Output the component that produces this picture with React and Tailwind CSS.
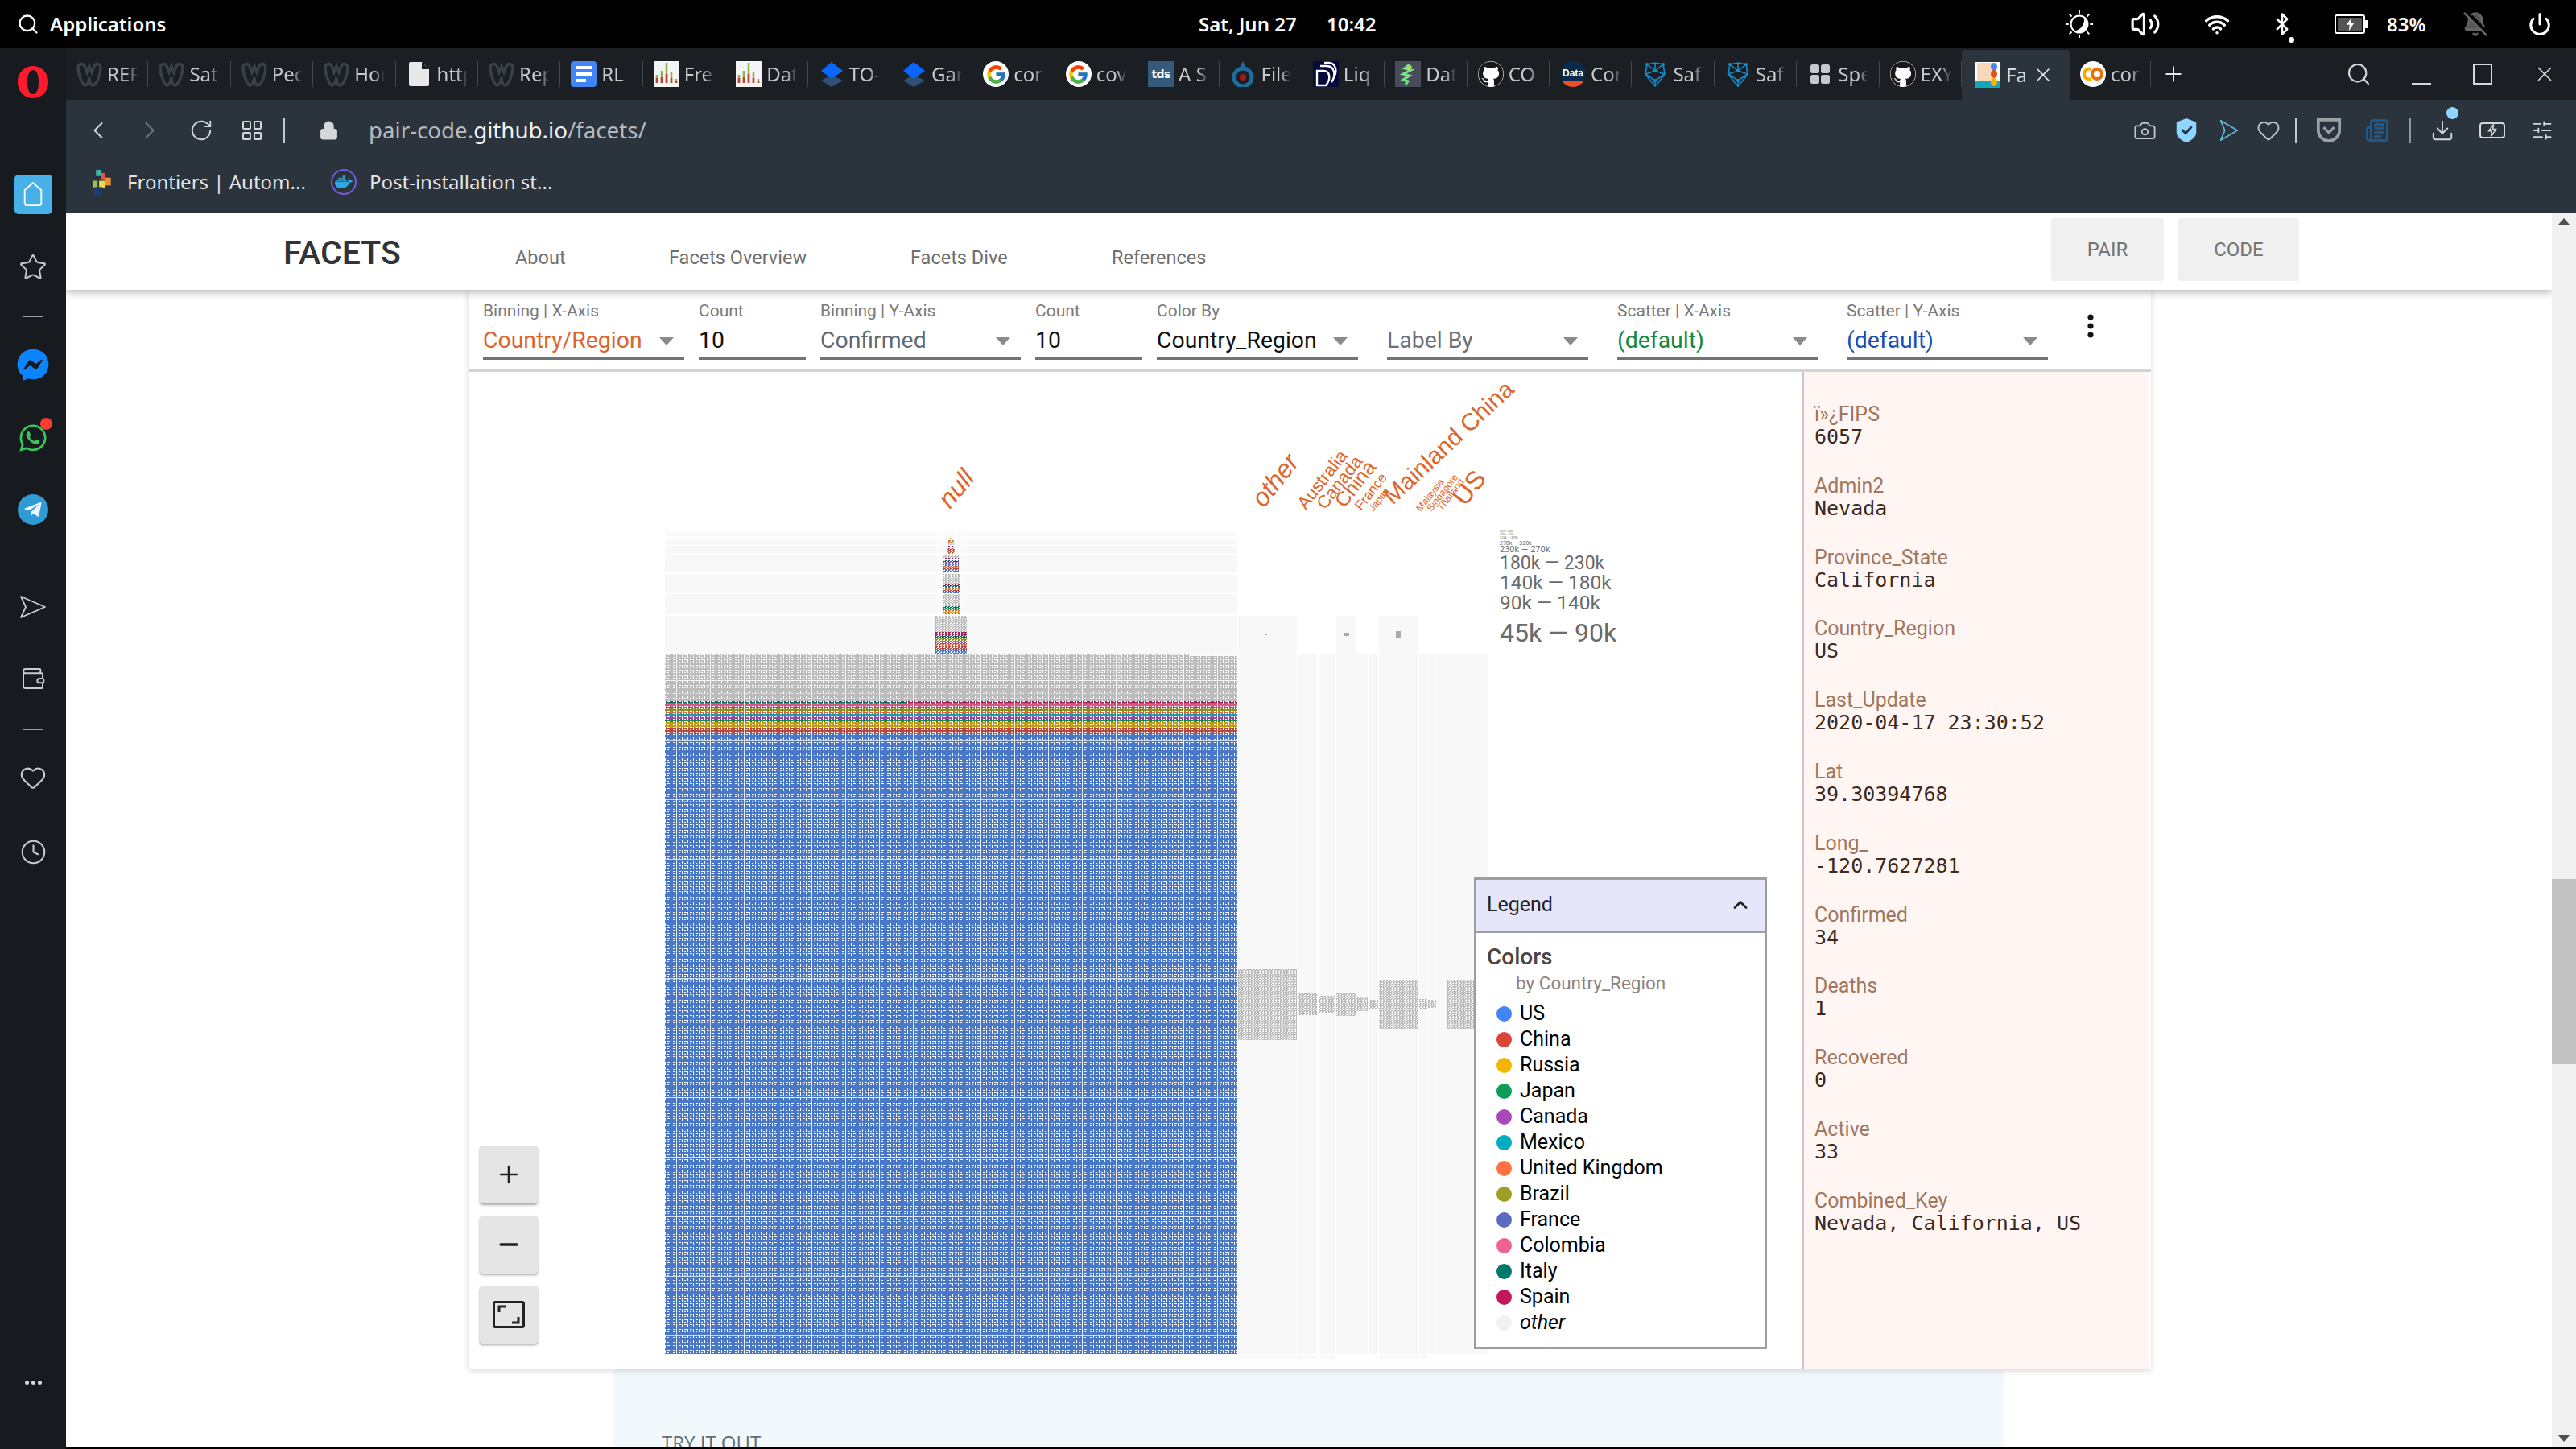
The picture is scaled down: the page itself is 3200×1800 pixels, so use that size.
import React from 'react';
import { Search, RotateCw, Lock, Camera, Heart, Plus, Minus, X, Star, Clock, ChevronLeft, ChevronRight, ChevronUp, Download, SlidersHorizontal, Volume2, BellOff, Power, Bluetooth, Wifi, Newspaper, Wallet } from 'lucide-react';
import { FaGithub, FaFacebookMessenger, FaWhatsapp, FaTelegramPlane, FaDocker } from 'react-icons/fa';
import { FcGoogle } from 'react-icons/fc';

const W = () => (
  <svg viewBox="0 0 32 32" className="w-[32px] h-[32px]"><path d="M2 8c0-5 6-6 8-2l3 8 3-8 3 8 3-8c2-4 8-3 8 2 0 8-5 22-10 22-3 0-4-7-4-10-1 3-2 10-5 10C7 30 2 16 2 8z" fill="none" stroke="#3a4047" strokeWidth="3.5" /></svg>
);
const Doc = () => (
  <svg viewBox="0 0 32 32" className="w-[32px] h-[32px]"><path d="M5 1h14l9 9v19a2 2 0 0 1-2 2H5a2 2 0 0 1-2-2V3a2 2 0 0 1 2-2z" fill="#e8e8e8" /><path d="M19 1v9h9" fill="#1b1e22" /></svg>
);
const GDoc = () => (
  <svg viewBox="0 0 32 32" className="w-[32px] h-[32px]"><rect width="32" height="32" rx="4" fill="#4285f4" /><rect x="6" y="6" width="20" height="4" fill="#fff" /><rect x="6" y="14" width="20" height="4" fill="#fff" /><rect x="6" y="22" width="13" height="4" fill="#fff" /></svg>
);
const Chart = () => (
  <svg viewBox="0 0 32 32" className="w-[32px] h-[32px]"><rect width="32" height="32" fill="#f5f5f5" /><path d="M4 27v-10M10 27V12M16 27V2M22 27V14M28 27v-5" stroke="#8fb24a" strokeWidth="2.5" /><path d="M4 27v-6M10 27v-7M16 27V16M22 27v-6M28 27v-2" stroke="#c23a3a" strokeWidth="2.5" /></svg>
);
const Drop = () => (
  <svg viewBox="0 0 32 32" className="w-[32px] h-[32px]"><path d="M16 17 L30 24 L16 32 L3 24z" fill="#2f4f74" /><path d="M16 1 L30 12 L16 22 L3 12z" fill="#0a66ff" /></svg>
);
const Tds = () => (
  <div className="w-[32px] h-[32px] bg-[#35597a] text-white text-[14px] font-bold flex items-center justify-center font-['DejaVu_Sans',sans-serif] tracking-tighter">tds</div>
);
const Wiki = () => (
  <svg viewBox="0 0 32 32" className="w-[32px] h-[32px]"><circle cx="16" cy="20" r="11" fill="none" stroke="#1f6d9e" strokeWidth="5" /><circle cx="16" cy="20" r="4" fill="#9c1c1c" /><path d="M16 0l4 8h-8z" fill="#1f6d9e" /></svg>
);
const Dl = () => (
  <svg viewBox="0 0 32 32" className="w-[32px] h-[32px]"><rect width="32" height="32" fill="#050a3a" /><path d="M5 12h8c8 0 10 10 3 18H5zM9 6h8c10 0 12 12 6 20M14 2h6c8 0 10 10 7 16" fill="none" stroke="#fff" strokeWidth="2.4" /></svg>
);
const Dat = () => (
  <svg viewBox="0 0 32 32" className="w-[32px] h-[32px]"><rect width="32" height="32" fill="#474b5a" /><path d="M18 4l-6 5 8 2-10 5 8 2-8 5 6 2-3 4" fill="none" stroke="#7be08a" strokeWidth="3" /><path d="M20 6l-4 4" stroke="#e5e04a" strokeWidth="3" /></svg>
);
const Gh = () => (
  <div className="w-[32px] h-[32px] rounded-full bg-white flex items-center justify-center overflow-hidden"><FaGithub className="w-[32px] h-[32px] text-[#191717]" /></div>
);
const DC = () => (
  <div className="w-[32px] h-[32px] rounded-full bg-[#0a2a4a] overflow-hidden flex flex-col items-center"><span className="text-white text-[12px] font-bold leading-[30px] h-[24px] font-['Liberation_Sans',sans-serif]">Data</span><div className="w-full flex-1 bg-[#f04e23]" /></div>
);
const Net = () => (
  <svg viewBox="0 0 32 32" className="w-[32px] h-[32px]"><path d="M6 4l10-2 10 2 2 12-6 8-6 7-6-7-6-8zM6 4l10 8 10-8M16 12l-12 4 12 8 12-8zM16 2v10M16 24v7" fill="none" stroke="#0e8fd0" strokeWidth="1.6" /><circle cx="6" cy="4" r="2" fill="#0e8fd0" /><circle cx="26" cy="4" r="2" fill="#0e8fd0" /><circle cx="16" cy="12" r="2" fill="#0e8fd0" /><circle cx="16" cy="24" r="2" fill="#0e8fd0" /></svg>
);
const Spe = () => (
  <svg viewBox="0 0 32 32" className="w-[32px] h-[32px]"><rect x="4" y="4" width="11" height="11" rx="2.5" fill="#c4c8cc" /><rect x="17" y="4" width="11" height="11" rx="2.5" fill="#c4c8cc" /><rect x="4" y="17" width="11" height="11" rx="2.5" fill="#c4c8cc" /><rect x="17" y="17" width="11" height="11" rx="2.5" fill="#c4c8cc" /></svg>
);
const Fa = () => (
  <svg viewBox="0 0 32 32" className="w-[32px] h-[32px]"><rect width="32" height="32" fill="#fff" /><rect x="3" y="1" width="19" height="22" fill="#f9d8b8" /><rect y="24" width="32" height="8" fill="#12a5bd" /><ellipse cx="24" cy="6" rx="4" ry="5" fill="#4285f4" /><ellipse cx="24" cy="15" rx="4" ry="5" fill="#ea4b1f" /><ellipse cx="24" cy="25" rx="4" ry="5" fill="#f4b400" /></svg>
);
const Colab = () => (
  <svg viewBox="0 0 32 32" className="w-[32px] h-[32px]"><circle cx="16" cy="16" r="16" fill="#fff" /><path d="M14 10a6.5 6.5 0 1 0 0 12" fill="none" stroke="#f9ab00" strokeWidth="4" /><circle cx="21" cy="16" r="6" fill="none" stroke="#e8710a" strokeWidth="4" /></svg>
);
const G = () => (
  <div className="w-[32px] h-[32px] rounded-full bg-white flex items-center justify-center"><FcGoogle className="w-[27px] h-[27px]" /></div>
);

const tabIcons = { w: W, doc: Doc, gdoc: GDoc, chart: Chart, drop: Drop, g: G, tds: Tds, wiki: Wiki, dl: Dl, dat: Dat, gh: Gh, dc: DC, net: Net, spe: Spe };
const tabs = [
  ['w', 'REF'], ['w', 'Sat'], ['w', 'Pec'], ['w', 'Hor'], ['doc', 'http'], ['w', 'Rep'], ['gdoc', 'RL'], ['chart', 'Fre'], ['chart', 'Dat'], ['drop', 'TO-'], ['drop', 'Gar'], ['g', 'cor'], ['g', 'cov'], ['tds', 'A S'], ['wiki', 'File'], ['dl', 'Liq'], ['dat', 'Dat'], ['gh', 'CO'], ['dc', 'Cor'], ['net', 'Saf'], ['net', 'Saf'], ['spe', 'Spe'], ['gh', 'EXY'],
];

function Tab({ kind, text }) {
  const I = tabIcons[kind];
  return (
    <div className="w-[102.4px] h-[64px] shrink-0 flex items-center relative pl-[13px]">
      <I />
      <span className="ml-[6px] w-[38px] overflow-hidden whitespace-nowrap text-[24px] text-[#c6cacd] [mask-image:linear-gradient(to_right,black_65%,transparent)]">{text}</span>
      <div className="absolute right-0 top-[16px] h-[32px] w-px bg-[#41464c]" />
    </div>
  );
}

function SideCell({ mt, children }) {
  return <div className={`h-[44px] flex items-center justify-center ${mt}`}>{children}</div>;
}
const SideLine = () => <div className="w-[24px] h-px bg-[#9ba0a5]" />;

function Sidebar() {
  return (
    <div className="w-[82px] shrink-0 bg-[#171b20] flex flex-col pt-[20px] pb-[61px]">
      <SideCell mt="">
        <svg viewBox="0 0 40 42" className="w-[40px] h-[42px]"><path fillRule="evenodd" d="M20 1C9 1 1 10 1 21s8 20 19 20 19-9 19-20S31 1 20 1zm0 5c-5 0-7 7-7 15s2 15 7 15 7-7 7-15-2-15-7-15z" fill="#ff1b2d" /></svg>
      </SideCell>
      <SideCell mt="mt-[95px]">
        <div className="w-[47px] h-[49px] rounded-[5px] bg-[#47b0e8] flex items-center justify-center">
          <svg viewBox="0 0 32 36" className="w-[30px] h-[34px]"><path d="M5 13 16 3l11 10v17a3 3 0 0 1-3 3H8a3 3 0 0 1-3-3z" fill="none" stroke="#fff" strokeWidth="2" strokeLinejoin="round" /></svg>
        </div>
      </SideCell>
      <SideCell mt="mt-[47px]"><Star className="w-[36px] h-[36px] text-[#c8ccd0]" strokeWidth={1.3} /></SideCell>
      <SideCell mt="mt-[17px]"><SideLine /></SideCell>
      <SideCell mt="mt-[16px]">
        <FaFacebookMessenger className="w-[40px] h-[40px] text-[#0a84ff]" />
      </SideCell>
      <SideCell mt="mt-[47px]">
        <div className="relative">
          <FaWhatsapp className="w-[38px] h-[38px] text-[#3bc45a]" />
          <div className="absolute -right-[5px] -top-[6px] w-[15px] h-[15px] rounded-full bg-[#ff3b30]" />
        </div>
      </SideCell>
      <SideCell mt="mt-[45px]">
        <div className="w-[38px] h-[38px] rounded-full bg-[#2f9bd6] flex items-center justify-center"><FaTelegramPlane className="w-[24px] h-[24px] text-[#eef6fb]" /></div>
      </SideCell>
      <SideCell mt="mt-[17px]"><SideLine /></SideCell>
      <SideCell mt="mt-[16px]">
        <svg viewBox="0 0 34 34" className="w-[34px] h-[34px]"><path d="M2 4 32 17 2 30l6-13z" fill="none" stroke="#c8ccd0" strokeWidth="1.8" strokeLinejoin="round" /></svg>
      </SideCell>
      <SideCell mt="mt-[45px]"><Wallet className="w-[32px] h-[32px] text-[#c8ccd0]" strokeWidth={1.5} /></SideCell>
      <SideCell mt="mt-[19px]"><SideLine /></SideCell>
      <SideCell mt="mt-[16px]"><Heart className="w-[34px] h-[34px] text-[#c8ccd0]" strokeWidth={1.5} /></SideCell>
      <SideCell mt="mt-[48px]"><Clock className="w-[33px] h-[33px] text-[#c8ccd0]" strokeWidth={1.5} /></SideCell>
      <div className="mt-auto h-[44px] flex items-center justify-center gap-[3px]">
        <span className="w-[5px] h-[5px] rounded-full bg-[#d5d8da]" />
        <span className="w-[5px] h-[5px] rounded-full bg-[#d5d8da]" />
        <span className="w-[5px] h-[5px] rounded-full bg-[#d5d8da]" />
      </div>
    </div>
  );
}

function TopBar() {
  return (
    <div className="h-[60px] shrink-0 bg-black text-white flex items-center text-[24px] font-semibold">
      <Search className="ml-[21px] w-[28px] h-[28px] shrink-0" strokeWidth={2} />
      <span className="ml-[13px] w-[145px] whitespace-nowrap">Applications</span>
      <span className="ml-[1282px] w-[121px] whitespace-nowrap">Sat, Jun 27</span>
      <span className="ml-[38px] w-[62px] whitespace-nowrap">10:42</span>
      <div className="ml-[851px] w-[44px] flex justify-center">
        <svg viewBox="0 0 40 40" className="w-[38px] h-[38px]"><circle cx="20" cy="20" r="11" fill="none" stroke="#fff" strokeWidth="2.2" /><path d="M20 9a11 11 0 0 1 0 22 16 16 0 0 0 0-22z" fill="#fff" transform="rotate(35 20 20)" /><path d="M20 2v4M20 34v4M2 20h4M34 20h4M7 7l3 3M30 30l3 3M7 33l3-3M30 10l3-3" stroke="#fff" strokeWidth="2" /></svg>
      </div>
      <Volume2 className="ml-[41px] w-[38px] h-[38px] shrink-0" strokeWidth={2} />
      <Wifi className="ml-[54px] w-[32px] h-[32px] shrink-0" strokeWidth={2.6} />
      <div className="ml-[50px] relative w-[30px]"><Bluetooth className="w-[30px] h-[34px]" strokeWidth={2} /><div className="absolute right-[0px] -bottom-[6px] w-[7px] h-[7px] rounded-full bg-white" /></div>
      <div className="ml-[50px] w-[38px] h-[24px] shrink-0 border-2 border-white rounded-[3px] flex items-center justify-center relative">
        <div className="absolute inset-[2px] bg-[#555]" />
        <svg viewBox="0 0 16 20" className="relative w-[13px] h-[18px]"><path d="M10 0 2 11h5l-1 9 8-12H9z" fill="#fff" /></svg>
        <div className="absolute -right-[6px] top-[5px] w-[4px] h-[10px] bg-white" />
      </div>
      <span className="ml-[27px] w-[50px] whitespace-nowrap">83%</span>
      <BellOff className="ml-[44px] w-[32px] h-[32px] shrink-0 text-[#666]" fill="#555" strokeWidth={2} />
      <Power className="ml-[49px] w-[30px] h-[30px] shrink-0" strokeWidth={2.4} />
    </div>
  );
}

function TabStrip() {
  return (
    <div className="h-[64px] shrink-0 bg-[#1b1e22] flex items-center relative font-['Noto_Sans',sans-serif] font-normal">
      {tabs.map(([k, t], i) => <Tab key={i} kind={k} text={t} />)}
      <div className="w-[134px] h-[62px] self-end bg-[#2b333c] rounded-t-[2px] flex items-center pl-[16px] shrink-0 mt-[2px]">
        <Fa />
        <span className="ml-[7px] w-[24px] overflow-hidden text-[24px] text-[#d8dbde]">Fa</span>
        <X className="ml-[8px] w-[28px] h-[28px] text-[#e8eaec]" strokeWidth={1.4} />
      </div>
      <div className="w-[101px] h-[64px] shrink-0 flex items-center pl-[13px] relative">
        <Colab />
        <span className="ml-[6px] w-[38px] overflow-hidden text-[24px] text-[#c6cacd] [mask-image:linear-gradient(to_right,black_65%,transparent)]">cor</span>
        <div className="absolute right-0 top-[16px] h-[32px] w-px bg-[#41464c]" />
      </div>
      <Plus className="ml-[13px] w-[30px] h-[30px] text-[#e3e5e7]" strokeWidth={1.6} />
      <Search className="ml-[199px] w-[32px] h-[32px] text-[#d5d8da]" strokeWidth={1.6} />
      <div className="ml-[50px] w-[24px] h-[2px] bg-[#d5d8da] mt-[24px]" />
      <div className="ml-[52px] w-[24px] h-[26px] border-2 border-[#d5d8da]" />
      <X className="ml-[50px] w-[30px] h-[30px] text-[#d5d8da]" strokeWidth={1.4} />
    </div>
  );
}

function AddressBar() {
  return (
    <div className="h-[140px] shrink-0 bg-[#2b333c] font-['Noto_Sans',sans-serif] font-normal">
      <div className="h-[76px] flex items-center">
        <ChevronLeft className="ml-[22px] w-[36px] h-[36px] text-[#d5d8da]" strokeWidth={1.4} />
        <ChevronRight className="ml-[28px] w-[36px] h-[36px] text-[#6f767c]" strokeWidth={1.4} />
        <RotateCw className="ml-[31px] w-[30px] h-[30px] text-[#d5d8da]" strokeWidth={1.5} />
        <div className="ml-[36px] w-[24px] h-[24px] grid grid-cols-2 gap-[3px]">
          <span className="border-2 border-[#d5d8da] rounded-[2px]" /><span className="border-2 border-[#d5d8da] rounded-[2px]" />
          <span className="border-2 border-[#d5d8da] rounded-[2px]" /><span className="border-2 border-[#d5d8da] rounded-[2px]" />
        </div>
        <div className="ml-[27px] w-[2px] h-[32px] bg-[#c5c9cc]" />
        <Lock className="ml-[42px] w-[25px] h-[28px] text-[#d5d8da]" fill="#d5d8da" strokeWidth={2} />
        <span className="ml-[37px] w-[344px] text-[27.7px] text-[#b4babe] whitespace-nowrap">pair-code.<span className="text-[#f0f1f2]">github.io</span>/facets/</span>
        <Camera className="ml-[1848px] w-[29px] h-[29px] text-[#c5c9cc]" strokeWidth={1.5} />
        <svg viewBox="0 0 30 34" className="ml-[22px] w-[30px] h-[32px]"><path d="M15 1l13 5v14c0 6-7 11-13 13C9 31 2 26 2 20V6z" fill="#8ed6ff" /><path d="M9 16l5 5 8-9" fill="none" stroke="#1f3648" strokeWidth="3" /></svg>
        <svg viewBox="0 0 30 32" className="ml-[25px] w-[26px] h-[30px]"><path d="M3 2 27 16 3 30l6-14z" fill="none" stroke="#62b6e0" strokeWidth="2" strokeLinejoin="round" /></svg>
        <Heart className="ml-[21px] w-[30px] h-[32px] text-[#c5c9cc]" strokeWidth={1.5} />
        <div className="ml-[18px] w-[2px] h-[32px] bg-[#c5c9cc]" />
        <svg viewBox="0 0 34 34" className="ml-[24px] w-[32px] h-[32px]"><path d="M3 3h28v14c0 8-7 14-14 14S3 25 3 17z" fill="none" stroke="#9aa0a4" strokeWidth="4" /><path d="M10 13l7 7 7-7" fill="none" stroke="#9aa0a4" strokeWidth="3.4" /></svg>
        <Newspaper className="ml-[29px] w-[30px] h-[30px] text-[#1b5a8a]" strokeWidth={2.4} />
        <div className="ml-[25px] w-[2px] h-[32px] bg-[#8f959a]" />
        <div className="ml-[24px] relative">
          <Download className="w-[30px] h-[30px] text-[#d5d8da]" strokeWidth={1.5} />
          <div className="absolute -right-[5px] -top-[14px] w-[15px] h-[15px] rounded-full bg-[#8ed6ff]" />
        </div>
        <div className="ml-[31px] w-[32px] h-[20px] border-2 border-[#d5d8da] rounded-[4px] flex items-center justify-center relative">
          <svg viewBox="0 0 16 20" className="w-[12px] h-[16px]"><path d="M10 0 2 11h5l-1 9 8-12H9z" fill="none" stroke="#d5d8da" strokeWidth="2" /></svg>
        </div>
        <SlidersHorizontal className="ml-[32px] w-[28px] h-[28px] text-[#d5d8da]" strokeWidth={1.6} />
      </div>
      <div className="h-[52px] flex items-center pl-[31px] text-[24px] text-[#e3e5e7]">
        <svg viewBox="0 0 24 32" className="w-[28px] h-[31px]"><rect x="4" y="0" width="6" height="8" fill="#3db6a8" /><rect x="10" y="4" width="6" height="8" fill="#e0584c" /><rect x="16" y="10" width="7" height="10" fill="#ef8c3c" /><rect x="0" y="14" width="6" height="9" fill="#9dc24a" /><rect x="8" y="14" width="8" height="9" fill="#eadb4a" /><rect x="2" y="22" width="10" height="10" fill="#1d3c6e" /></svg>
        <span className="ml-[17px] w-[221px] whitespace-nowrap">Frontiers | Autom...</span>
        <div className="ml-[32px] w-[32px] h-[32px] rounded-full border-2 border-[#7a5ae0] flex items-center justify-center"><FaDocker className="w-[22px] h-[22px] text-[#2ea9e0]" /></div>
        <span className="ml-[16px] whitespace-nowrap">Post-installation st...</span>
      </div>
    </div>
  );
}

const stripes = [
  ['#aa1f58', 871, 873.5], ['#0a6a5e', 873.5, 875], ['#d55a88', 875, 878], ['#5568b8', 878, 880], ['#8c8f28', 880, 883], ['#d9683c', 883, 887], ['#0fa0b5', 887, 889], ['#9a47ac', 889, 893], ['#158a55', 893, 897], ['#c89a10', 897, 904], ['#b9483e', 904, 911],
];
const rows = [[660, 661], [662, 666], [668, 670], [671, 677], [678, 688], [689, 711], [713, 737], [738, 763], [765, 812]];
const cols = [[1538, 1611], [1613, 1636], [1638, 1659], [1660, 1684], [1685, 1699], [1700, 1712], [1713, 1762], [1763, 1773], [1774, 1784], [1785, 1797], [1798, 1848]];
const blobs = [[1538, 1611, 1204, 1292], [1613, 1636, 1234, 1261], [1638, 1659, 1237, 1259], [1660, 1684, 1233, 1262], [1685, 1699, 1239, 1256], [1700, 1712, 1242, 1253], [1713, 1762, 1218, 1278], [1763, 1773, 1241, 1254], [1774, 1784, 1242, 1252], [1798, 1835, 1217, 1278]];
const blue = '#4a78c8', red = '#b9483e', yel = '#c89a10', grn = '#158a55', pur = '#9a47ac', org = '#d9683c', oli = '#8c8f28', tea = '#0a6a5e', mar = '#aa1f58', gry = '#bcbcbc';
const tower = [
  [1161, 1201, gry, 765, 785], [1161, 1201, mar, 785, 790], [1161, 1201, tea, 790, 792], [1161, 1201, oli, 792, 798], [1161, 1201, pur, 798, 800], [1161, 1201, org, 800, 803], [1161, 1201, red, 803, 807], [1161, 1201, blue, 807, 812],
  [1171, 1192, gry, 738, 753], [1171, 1192, tea, 753, 755], [1171, 1192, grn, 755, 757], [1171, 1192, org, 757, 759], [1171, 1192, yel, 759, 761], [1171, 1192, red, 761, 763],
  [1171, 1192, gry, 713, 725], [1171, 1192, mar, 725, 727], [1171, 1192, tea, 727, 729], [1171, 1192, blue, 729, 731], [1171, 1192, org, 731, 733], [1171, 1192, red, 733, 735], [1171, 1192, blue, 735, 737],
  [1172, 1191, gry, 689, 693], [1172, 1191, mar, 693, 695], [1172, 1191, tea, 696, 698], [1172, 1191, pur, 698, 700], [1172, 1191, blue, 700, 703], [1172, 1191, org, 703, 705], [1172, 1191, red, 706, 708], [1172, 1191, blue, 708, 711],
  [1177, 1186, mar, 678, 680], [1177, 1186, red, 681, 684], [1177, 1186, org, 684, 688],
  [1178, 1185, org, 671, 675], [1178, 1185, gry, 675, 677], [1180, 1183, yel, 668, 670], [1180, 1183, yel, 664, 665], [1181, 1183, yel, 660, 661],
];
const labels = [
  ['null', 1180, 633, 32, true, -50], ['other', 1570, 632, 32, true, -52], ['Australia', 1622, 634, 22, false, -52], ['Canada', 1646, 634, 22, false, -52], ['China', 1670, 632, 25, false, -52], ['France', 1691, 635, 17, false, -52], ['Japan', 1706, 636, 12, false, -52],
  ['Mainland China', 1730, 628, 30, false, -43], ['Malaysia', 1765, 636, 12, false, -52], ['Singapore', 1778, 636, 12, false, -52], ['Thailand', 1791, 635, 12, false, -52], ['US', 1820, 630, 32, false, -52],
];
const ylabels = [
  ['45k — 90k', 797, 32], ['90k — 140k', 757, 24.5], ['140k — 180k', 732, 24.5], ['180k — 230k', 707, 23], ['230k — 270k', 686, 11], ['270k — 320k', 677, 7], ['320k — 370k', 669, 4], ['370k — 420k', 665, 3], ['420k — 480k', 661, 3],
];

function Chart2() {
  const tick = (y) => (
    <g key={y}>
      <rect x="0" y={y} width="1" height="4" /><rect x="3" y={y} width="3" height="1" /><rect x="3" y={y + 3} width="2" height="1" />
    </g>
  );
  return (
    <svg viewBox="583 462 1655 1238" className="block w-[1655px] h-[1238px]">
      <defs>
        <pattern id="ticks" x="826" y="813" width="7" height="32" patternUnits="userSpaceOnUse">
          <g fill="#fff" fillOpacity="0.95" shapeRendering="crispEdges">
            {[0, 6, 13, 19, 26].map(tick)}
          </g>
        </pattern>
        <pattern id="lines" x="826" y="813" width="42" height="74" patternUnits="userSpaceOnUse">
          <g fill="#fff" fillOpacity="0.7" shapeRendering="crispEdges">
            <rect x="14" y="0" width="1" height="74" />
            <rect x="0" y="32" width="42" height="1" />
          </g>
        </pattern>
        <pattern id="fine" x="0" y="0" width="4" height="3" patternUnits="userSpaceOnUse">
          <g fill="#fff" fillOpacity="0.9" shapeRendering="crispEdges">
            <rect x="0" y="0" width="2" height="1" /><rect x="3" y="1" width="1" height="1" /><rect x="1" y="2" width="1" height="1" />
          </g>
        </pattern>
      </defs>
      {rows.map(([a, b], i) => <rect key={i} x="826" y={a} width="711" height={b - a} fill="#f8f8f8" />)}
      <rect x="1538" y="765" width="73" height="47" fill="#f8f8f8" />
      <rect x="1660" y="765" width="24" height="47" fill="#f8f8f8" />
      <rect x="1713" y="765" width="49" height="47" fill="#f8f8f8" />
      {cols.map(([a, b], i) => <rect key={i} x={a} y="813" width={b - a} height="869" fill="#f8f8f8" />)}
      {cols.slice(0, 3).concat([cols[6], cols[7]]).map(([a, b], i) => <rect key={i} x={a} y="1683" width={b - a} height="5" fill="#f8f8f8" />)}
      <rect x="1572" y="787" width="2" height="2" fill="#aaa" />
      <rect x="1669" y="786" width="7" height="4" fill="#aaa" />
      <rect x="1734" y="784" width="6" height="8" fill="#aaa" />
      <rect x="826" y="813" width="711" height="58" fill={gry} />
      <rect x="1478" y="813" width="59" height="2" fill="#f8f8f8" />
      {stripes.map(([c, a, b], i) => <rect key={i} x="826" y={a} width="711" height={b - a} fill={c} />)}
      <rect x="826" y="871" width="301" height="2" fill="#0a6a5e" />
      <rect x="826" y="911" width="711" height="771" fill={blue} />
      <rect x="826" y="813" width="711" height="869" fill="url(#ticks)" />
      <rect x="826" y="813" width="711" height="869" fill="url(#lines)" />
      {tower.map(([x1, x2, c, a, b], i) => <rect key={i} x={x1} y={a} width={x2 - x1} height={b - a} fill={c} />)}
      <rect x="1161" y="660" width="40" height="152" fill="url(#fine)" />
      {blobs.map(([x1, x2, a, b], i) => <rect key={i} x={x1} y={a} width={x2 - x1} height={b - a} fill={gry} />)}
      {blobs.map(([x1, x2, a, b], i) => <rect key={i} x={x1} y={a} width={x2 - x1} height={b - a} fill="url(#fine)" />)}
      {labels.map(([t, x, y, s, it, r]) => (
        <text key={t} x={x} y={y} fontSize={s} fontStyle={it ? 'italic' : 'normal'} fontFamily="'Liberation Sans',sans-serif" fill="#e0642a" transform={`rotate(${r} ${x} ${y})`}>{t}</text>
      ))}
      {ylabels.map(([t, y, s]) => (
        <text key={t} x="1863" y={y} fontSize={s} fontFamily="Roboto,sans-serif" fill="#6b6b6b">{t}</text>
      ))}
    </svg>
  );
}

const legend = [
  ['US', 'bg-[#4285f4]'], ['China', 'bg-[#db4437]'], ['Russia', 'bg-[#f4b400]'], ['Japan', 'bg-[#0f9d58]'], ['Canada', 'bg-[#ab47bc]'], ['Mexico', 'bg-[#00acc1]'], ['United Kingdom', 'bg-[#ff7043]'], ['Brazil', 'bg-[#9e9d24]'], ['France', 'bg-[#5c6bc0]'], ['Colombia', 'bg-[#f06292]'], ['Italy', 'bg-[#00796b]'], ['Spain', 'bg-[#c2185b]'],
];

function Legend() {
  return (
    <div className="absolute left-[1248px] top-[628px] w-[364px] h-[586px] border-[3px] border-[#9e9e9e] bg-white text-black font-[Roboto,sans-serif]">
      <div className="h-[66px] bg-[#e6e6fa] border-b-[3px] border-[#9e9e9e] flex items-center justify-between pl-[13px] pr-[16px] pb-[2px]">
        <span className="text-[25px] text-[#222]">Legend</span>
        <ChevronUp className="w-[28px] h-[28px] text-[#222]" strokeWidth={2.4} />
      </div>
      <div className="pl-[13px] pt-[14px]">
        <div className="text-[28px] font-medium text-[#4e4441] leading-[32px]">Colors</div>
        <div className="pl-[36px] text-[22.5px] text-[#8d8380] leading-[32px]">by Country_Region</div>
        <div className="mt-[6px] pl-[12px]">
          {legend.map(([t, c]) => (
            <div key={t} className="h-[32px] flex items-center">
              <span className={`w-[19px] h-[19px] rounded-full ${c}`} />
              <span className="ml-[10px] text-[25px] leading-[32px]">{t}</span>
            </div>
          ))}
          <div className="h-[32px] flex items-center">
            <span className="w-[19px] h-[19px] rounded-full bg-[#f1f1f1]" />
            <span className="ml-[10px] text-[25px] italic leading-[32px]">other</span>
          </div>
        </div>
      </div>
    </div>
  );
}

function ZoomBtn({ className, children }) {
  return <div className={`w-[72px] h-[72px] rounded-[4px] bg-[#e5e5e5] shadow-[0_2px_3px_rgba(0,0,0,0.35)] flex items-center justify-center ${className}`}>{children}</div>;
}

const fields = [
  { label: 'Binning | X-Axis', value: 'Country/Region', w: 'w-[250px]', color: 'text-[#e0642a]', arrow: true },
  { label: 'Count', value: '10', w: 'w-[133px] ml-[18px]', color: 'text-[#111]' },
  { label: 'Binning | Y-Axis', value: 'Confirmed', w: 'w-[249px] ml-[18px]', color: 'text-[#5f6b76]', arrow: true },
  { label: 'Count', value: '10', w: 'w-[133px] ml-[18px]', color: 'text-[#111]' },
  { label: 'Color By', value: 'Country_Region', w: 'w-[250px] ml-[18px]', color: 'text-[#111]', arrow: true },
  { label: '', value: 'Label By', w: 'w-[250px] ml-[36px]', color: 'text-[#6b7078]', arrow: true },
  { label: 'Scatter | X-Axis', value: '(default)', w: 'w-[249px] ml-[36px]', color: 'text-[#0f8a45]', arrow: true },
  { label: 'Scatter | Y-Axis', value: '(default)', w: 'w-[250px] ml-[36px]', color: 'text-[#1a4db5]', arrow: true },
];

function Field({ f }) {
  return (
    <div className={`${f.w} shrink-0`}>
      <div className="h-[24px] text-[21px] leading-[24px] text-[#7a7a7a] whitespace-nowrap">{f.label}</div>
      <div className={`h-[49px] border-b-[3px] border-[#737373] flex items-center justify-between pt-[5px] pr-[13px] text-[28.4px] ${f.color}`}>
        <span>{f.value}</span>
        {f.arrow && <span className="w-0 h-0 border-x-[9px] border-x-transparent border-t-[10px] border-t-[#8a8a8a]" />}
      </div>
    </div>
  );
}

const details = [
  ['ï»¿FIPS', '6057'], ['Admin2', 'Nevada'], ['Province_State', 'California'], ['Country_Region', 'US'], ['Last_Update', '2020-04-17 23:30:52'], ['Lat', '39.30394768'], ['Long_', '-120.7627281'], ['Confirmed', '34'], ['Deaths', '1'], ['Recovered', '0'], ['Active', '33'], ['Combined_Key', 'Nevada, California, US'],
];

function Panel() {
  return (
    <div className="ml-[500px] w-[2090px] h-[1340px] shrink-0 bg-white border-l border-[#eeeeee] shadow-[0_3px_8px_rgba(0,0,0,0.15)] font-[Roboto,sans-serif] relative flex flex-col">
      <div className="h-[102px] shrink-0 border-b-[3px] border-[#d3d3d3] flex pt-[14px] pl-[17px]">
        {fields.map((f, i) => <Field key={i} f={f} />)}
        <svg viewBox="0 0 8 32" className="ml-[49px] mt-[16px] w-[8px] h-[32px]"><circle cx="4" cy="4" r="3.6" fill="#111" /><circle cx="4" cy="15" r="3.6" fill="#111" /><circle cx="4" cy="26" r="3.6" fill="#111" /></svg>
      </div>
      <div className="flex-1 flex relative">
        <div className="relative w-[1655px] shrink-0">
          <Chart2 />
          <div className="absolute left-[13px] top-[961px] flex flex-col">
            <ZoomBtn className=""><Plus className="w-[34px] h-[34px] text-[#222]" strokeWidth={1.8} /></ZoomBtn>
            <ZoomBtn className="mt-[15px]"><Minus className="w-[34px] h-[34px] text-[#222]" strokeWidth={2.4} /></ZoomBtn>
            <ZoomBtn className="mt-[15px]">
              <svg viewBox="0 0 40 34" className="w-[40px] h-[34px]"><rect x="1.5" y="1.5" width="37" height="31" rx="2" fill="none" stroke="#222" strokeWidth="3" /><path d="M8 14V7h8M32 20v7h-8" fill="none" stroke="#222" strokeWidth="3" /></svg>
            </ZoomBtn>
          </div>
          <Legend />
        </div>
        <div className="w-[432px] shrink-0 bg-[#fff6f3] border-l-[3px] border-[#c8c8c8] pl-[13px] pt-[39px]">
          {details.map(([k, v]) => (
            <div key={k} className="h-[88.8px]">
              <div className="text-[25px] leading-[28px] text-[#a1775f]">{k}</div>
              <div className="text-[25px] leading-[28px] text-[#3e2a1c] font-['DejaVu_Sans_Mono',monospace] whitespace-nowrap">{v}</div>
            </div>
          ))}
        </div>
      </div>
    </div>
  );
}

function Page() {
  return (
    <div className="flex-1 flex min-h-0 bg-white border-b-2 border-black">
      <div className="flex-1 min-w-0 flex flex-col overflow-hidden">
        <div className="h-[96px] shrink-0 bg-white shadow-[0_3px_10px_rgba(0,0,0,0.3)] relative z-10 flex font-[Roboto,sans-serif]">
          <span className="ml-[270px] mt-[26px] h-[48px] w-[147px] text-[41px] leading-[48px] font-medium text-[#333]">FACETS</span>
          <span className="ml-[141px] mt-[43px] w-[63px] text-[23.5px] leading-[26px] text-[#6f6f6f]">About</span>
          <span className="ml-[128px] mt-[43px] w-[171px] text-[23.5px] leading-[26px] text-[#6f6f6f] whitespace-nowrap">Facets Overview</span>
          <span className="ml-[129px] mt-[43px] w-[120px] text-[23.5px] leading-[26px] text-[#6f6f6f] whitespace-nowrap">Facets Dive</span>
          <span className="ml-[130px] mt-[43px] w-[116px] text-[23.5px] leading-[26px] text-[#6f6f6f]">References</span>
          <div className="ml-[1051px] mt-[7px] w-[140px] h-[78px] bg-[#f0f0f0] rounded-[3px] flex items-center justify-center text-[24px] text-[#757575]">PAIR</div>
          <div className="ml-[18px] mt-[7px] w-[150px] h-[78px] bg-[#f0f0f0] rounded-[3px] flex items-center justify-center text-[24px] text-[#757575]">CODE</div>
        </div>
        <Panel />
        <div className="ml-[679px] w-[1728px] flex-1 bg-[#f2f9fc] pl-[61px] pt-[80px]">
          <span className="block text-[24px] leading-[24px] font-medium text-[#5f6f75] font-['Open_Sans',sans-serif]">TRY IT OUT</span>
        </div>
      </div>
      <div className="w-[30px] shrink-0 bg-[#f1f1f1] flex flex-col items-center">
        <span className="mt-[7px] w-0 h-0 border-x-[7px] border-x-transparent border-b-[8px] border-b-[#505050]" />
        <div className="mt-[813px] w-full h-[230px] bg-[#c1c1c1]" />
        <span className="mt-auto mb-[7px] w-0 h-0 border-x-[7px] border-x-transparent border-t-[8px] border-t-[#505050]" />
      </div>
    </div>
  );
}

export default function App() {
  return (
    <div className="w-[3200px] h-[1800px] overflow-hidden flex flex-col bg-black font-['Noto_Sans',sans-serif]">
      <TopBar />
      <div className="flex-1 min-h-0 flex">
        <Sidebar />
        <div className="flex-1 min-w-0 flex flex-col">
          <TabStrip />
          <AddressBar />
          <Page />
        </div>
      </div>
    </div>
  );
}
